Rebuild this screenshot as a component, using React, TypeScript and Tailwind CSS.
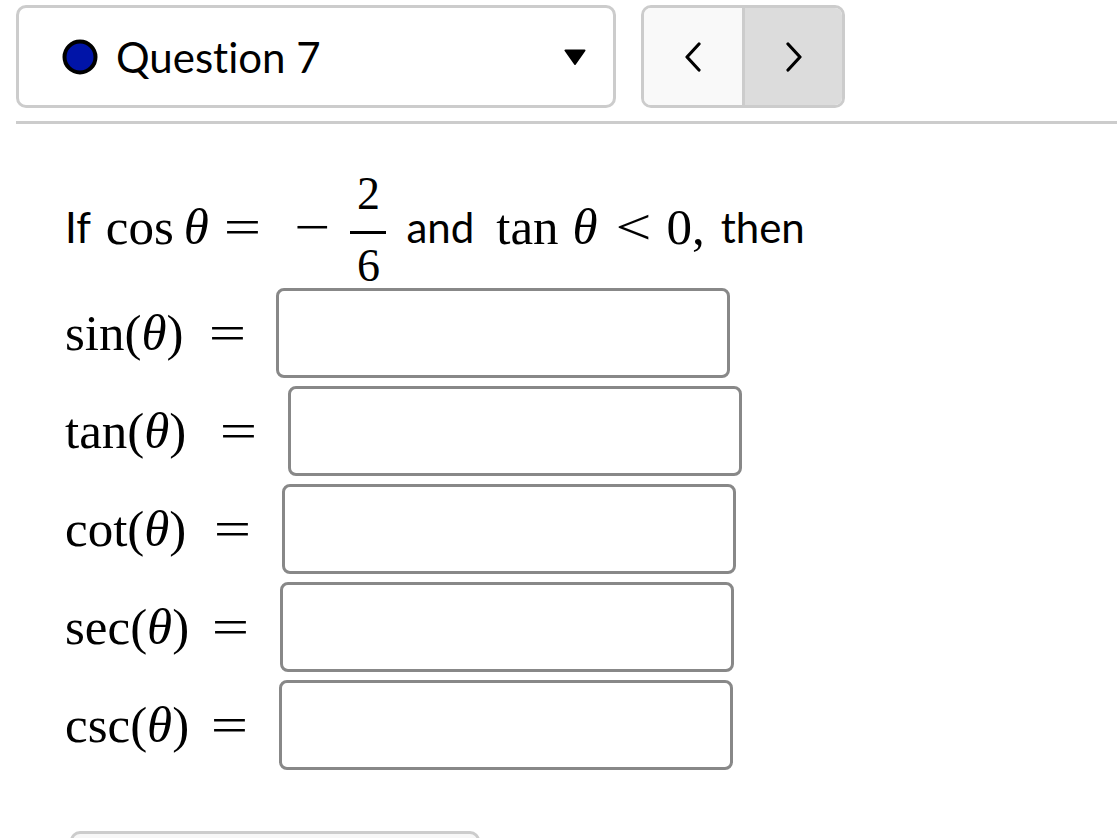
import React from "react";

const SERIF = "font-['Liberation_Serif','Times_New_Roman',serif]";
const SANS = "font-['Lato','Noto_Sans',sans-serif] [font-variant-ligatures:none]";

function Theta() {
  return <span className="italic">θ</span>;
}

function AnswerRow({ fn, eqGap }: { fn: string; eqGap: string }) {
  return (
    <div className="flex items-center h-[90px]">
      <span className={`${SERIF} text-[51px] leading-none text-black whitespace-nowrap`}>
        {fn}(<Theta />)
      </span>
      <span className={`${SERIF} text-[51px] leading-none text-black inline-block scale-x-[1.3] ${eqGap}`}>=</span>
      <div className="ml-[35px] w-[454px] h-[90px] border-[3px] border-[#888888] rounded-[8px] bg-white shrink-0" />
    </div>
  );
}

export default function App() {
  return (
    <div className="w-[1117px] h-[838px] overflow-hidden bg-white text-black relative">
      {/* Header */}
      <div className="flex pt-[5px] pl-[16px]">
        <div className="flex items-center w-[600px] h-[103px] border-[3px] border-[#cccccc] rounded-[10px] bg-white">
          <svg width="36" height="36" viewBox="0 0 36 36" className="ml-[43px] shrink-0">
            <circle cx="18" cy="18" r="15.5" fill="#0014a8" stroke="#000" strokeWidth="4" />
          </svg>
          <span className={`${SANS} text-[42px] leading-none ml-[18px] text-black`}>Question 7</span>
          <svg width="22" height="16" viewBox="0 0 22 16" className="ml-auto mr-[27px] shrink-0">
            <path d="M1.5 1.5 H20.5 L11 15 Z" fill="#000" stroke="#000" strokeWidth="2" strokeLinejoin="round" />
          </svg>
        </div>
        <div className="ml-[25px] flex w-[204px] h-[103px] border-[3px] border-[#cccccc] rounded-[10px] overflow-hidden">
          <div className="w-[98px] h-full bg-[#f9f9f9] flex items-center justify-center">
            <svg width="18" height="30" viewBox="0 0 18 30">
              <path d="M15 2 L3 15 L15 28" fill="none" stroke="#000" strokeWidth="3.2" strokeLinecap="round" strokeLinejoin="round" />
            </svg>
          </div>
          <div className="w-[3px] h-full bg-[#cccccc]" />
          <div className="flex-1 h-full bg-[#dcdcdc] flex items-center justify-center">
            <svg width="18" height="30" viewBox="0 0 18 30">
              <path d="M3 2 L15 15 L3 28" fill="none" stroke="#000" strokeWidth="3.2" strokeLinecap="round" strokeLinejoin="round" />
            </svg>
          </div>
        </div>
      </div>
      <div className="ml-[16px] mt-[13px] h-[3px] bg-[#cccccc]" />

      {/* Question */}
      <div className="pl-[65px]">
        <div className="flex items-center mt-[48px] h-[110px]">
          <span className={`${SANS} text-[42px] leading-none`}>If</span>
          <span className={`${SERIF} text-[51px] leading-none ml-[15px]`}>cos</span>
          <span className={`${SERIF} text-[51px] leading-none ml-[10px]`}>
            <Theta />
          </span>
          <span className={`${SERIF} text-[51px] leading-none inline-block scale-x-[1.3] ml-[19px]`}>=</span>
          <span className={`${SERIF} text-[51px] leading-none inline-block scale-x-[1.25] ml-[41px]`}>−</span>
          <span className="inline-flex flex-col items-center ml-[24px] pt-[5px]">
            <span className={`${SERIF} text-[46px] leading-none`}>2</span>
            <span className="w-[36px] h-[3px] bg-black mt-[14px] mb-[9px]" />
            <span className={`${SERIF} text-[46px] leading-none`}>6</span>
          </span>
          <span className={`${SANS} text-[42px] leading-none ml-[20px]`}>and</span>
          <span className={`${SERIF} text-[51px] leading-none ml-[22px]`}>tan</span>
          <span className={`${SERIF} text-[51px] leading-none ml-[14px]`}>
            <Theta />
          </span>
          <span className={`${SERIF} text-[51px] leading-none inline-block scale-x-[1.25] ml-[21px]`}>&lt;</span>
          <span className={`${SERIF} text-[51px] leading-none ml-[19px]`}>0,</span>
          <span className={`${SANS} text-[42px] leading-none ml-[16px]`}>then</span>
        </div>

        <div className="flex flex-col gap-[8px] mt-[6px]">
          <AnswerRow fn="sin" eqGap="ml-[29px]" />
          <AnswerRow fn="tan" eqGap="ml-[38px]" />
          <AnswerRow fn="cot" eqGap="ml-[32px]" />
          <AnswerRow fn="sec" eqGap="ml-[27px]" />
          <AnswerRow fn="csc" eqGap="ml-[26px]" />
        </div>
      </div>

      <div className="ml-[70px] mt-[61px] w-[410px] h-[60px] border-[3px] border-[#cccccc] rounded-[10px] bg-[#f7f7f7]" />
    </div>
  );
}
